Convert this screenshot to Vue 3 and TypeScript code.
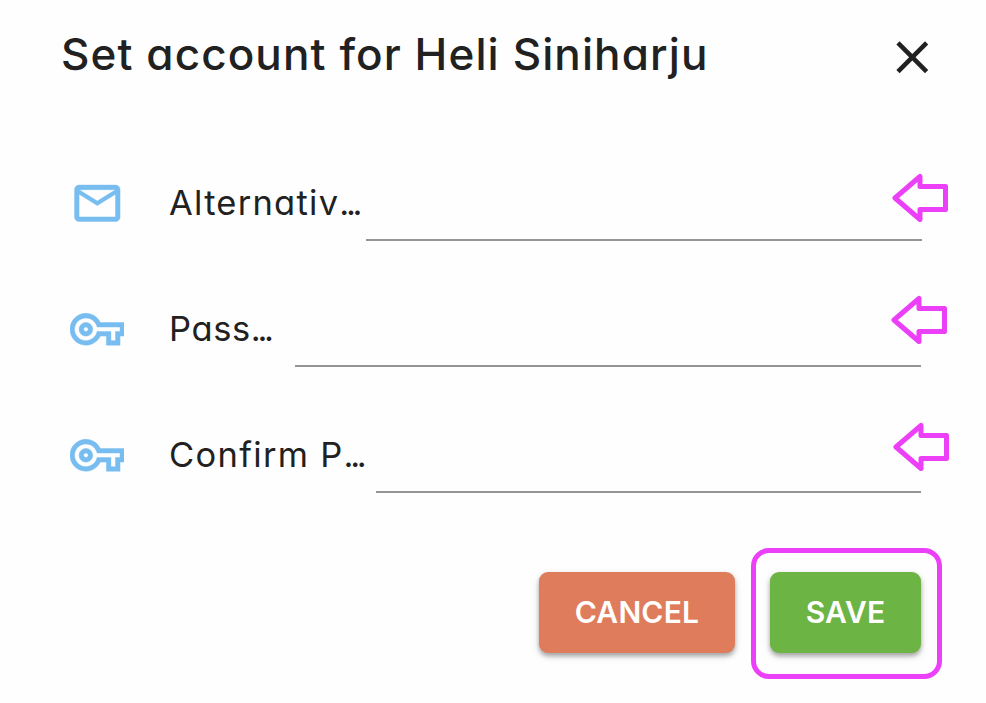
<script setup lang="ts">
interface Field {
  id: string
  label: string
  icon: 'mail' | 'key'
}

const fields: Field[] = [
  { id: 'email', label: 'Alternativ', icon: 'mail' },
  { id: 'password', label: 'Pass', icon: 'key' },
  { id: 'confirm', label: 'Confirm P', icon: 'key' },
]

const icons: Record<Field['icon'], string> = {
  mail: 'M22 6c0-1.100-.9-2-2-2H4c-1.100 0-2 .9-2 2v12c0 1.100.9 2 2 2h16c1.100 0 2-.9 2-2V6zm-2 0l-8 5-8-5h16zm0 12H4V8l8 5 8-5v10z',
  key: 'M22 19h-6v-4h-2.680c-1.140 2.420-3.600 4-6.320 4-3.860 0-7-3.140-7-7s3.140-7 7-7c2.720 0 5.170 1.580 6.320 4H24v6h-2v4zm-4-2h2v-4h2v-2H11.940l-.23-.67C11.010 8.340 9.110 7 7 7c-2.760 0-5 2.240-5 5s2.240 5 5 5c2.110 0 4.010-1.340 4.710-3.330l.23-.67H18v4zM7 15c-1.650 0-3-1.350-3-3s1.350-3 3-3 3 1.350 3 3-1.350 3-3 3zm0-4c-.55 0-1 .45-1 1s.45 1 1 1 1-.45 1-1-.45-1-1-1z',
}
</script>

<template>
  <main class="dialog">
    <header class="header">
      <h1 class="title">Set account for Heli Siniharju</h1>
      <button class="close" type="button" aria-label="Close">
        <svg class="icon" viewBox="0 0 24 24"><path d="M19 6.410L17.590 5 12 10.590 6.410 5 5 6.410 10.590 12 5 17.590 6.410 19 12 13.410 17.590 19 19 17.590 13.410 12z" /></svg>
      </button>
    </header>

    <form class="fields" @submit.prevent>
      <div v-for="field in fields" :key="field.id" class="row" :class="field.id">
        <svg class="icon tint" viewBox="0 0 24 24"><path :d="icons[field.icon]" /></svg>
        <label class="label" :for="field.id">{{ field.label }}<span class="dots">...</span></label>
        <input :id="field.id" class="input" :type="field.icon === 'key' ? 'password' : 'email'" />
        <svg class="arrow" viewBox="0 0 56 50">
          <path d="M3 25L28 3.500V13.500H53.500V36.500H28V46.500Z" />
        </svg>
      </div>
    </form>

    <footer class="actions">
      <button class="button cancel" type="button">CANCEL</button>
      <div class="highlight">
        <button class="button save" type="button">SAVE</button>
      </div>
    </footer>
  </main>
</template>

<style>
body {
  background: #fefefe;
}
</style>

<style scoped>
.dialog {
  box-sizing: border-box;
  width: 986px;
  height: 703px;
  overflow: hidden;
  background: #fefefe;
  color: #212121;
  font-family: Inter, "Liberation Sans", sans-serif;
  font-feature-settings: "cv11", "calt" 0;
}

.header {
  display: flex;
  justify-content: space-between;
  height: 140px;
  padding: 0 46.500px 0 61px;
}

.title {
  margin: 24px 0 0;
  font-size: 44px;
  font-weight: 540;
  line-height: 60px;
  letter-spacing: 1.100px;
  white-space: nowrap;
}

.close {
  width: 54.600px;
  height: 54.600px;
  margin-top: 29.700px;
  padding: 0;
  border: 0;
  background: none;
  color: inherit;
}

.icon {
  display: block;
  flex: none;
  width: 54.600px;
  height: 54.600px;
  fill: currentColor;
}

.tint {
  color: #78bdf0;
  stroke: currentColor;
  stroke-width: 0.200;
}

.row {
  position: relative;
  display: flex;
  align-items: center;
  box-sizing: border-box;
  height: 126px;
  padding: 0 65px 0 69.500px;
}

.email {
  padding-right: 64px;
}

.label {
  flex: none;
  margin-left: 44.900px;
  font-size: 34.500px;
  line-height: 50px;
  white-space: nowrap;
}

.email .label {
  width: 197px;
  letter-spacing: 1.250px;
}

.password .label {
  width: 126px;
  letter-spacing: 0.600px;
}

.confirm .label {
  width: 207px;
  letter-spacing: 1.300px;
}

.label .dots {
  letter-spacing: -3.300px;
}

.input {
  flex: 1;
  min-width: 0;
  box-sizing: border-box;
  height: 50px;
  margin-top: 26px;
  padding: 0;
  border: 0;
  border-bottom: 2px solid #949494;
  background: none;
  outline: none;
}

.arrow {
  position: absolute;
  top: 33px;
  left: 892px;
  width: 56px;
  height: 50px;
  fill: #fefefe;
  stroke: #ec3ff8;
  stroke-width: 5;
  stroke-linejoin: round;
}

.password .arrow {
  top: 29px;
  left: 891px;
}

.confirm .arrow {
  top: 30px;
  left: 893px;
}

.actions {
  display: flex;
  justify-content: flex-end;
  align-items: center;
  gap: 16px;
  height: 131px;
  margin-top: 30px;
  padding-right: 44px;
}

.highlight {
  display: flex;
  align-items: center;
  justify-content: center;
  box-sizing: border-box;
  width: 191px;
  height: 131px;
  padding: 0 2px 2px 0;
  border: 5px solid #ec3ff8;
  border-radius: 18px;
}

.button {
  height: 81px;
  padding: 0;
  border: 0;
  border-radius: 9px;
  color: #fff;
  font-family: inherit;
  font-feature-settings: inherit;
  font-size: 30px;
  font-weight: 600;
  line-height: 81px;
  box-shadow: 0 3px 4px rgba(0, 0, 0, 0.28), 0 3px 9px rgba(0, 0, 0, 0.13);
}

.cancel {
  width: 196px;
  margin-bottom: 2px;
  background: #df7c5c;
  letter-spacing: 0.200px;
}

.save {
  width: 151px;
  background: #6cb444;
  letter-spacing: 0.200px;
}
</style>
